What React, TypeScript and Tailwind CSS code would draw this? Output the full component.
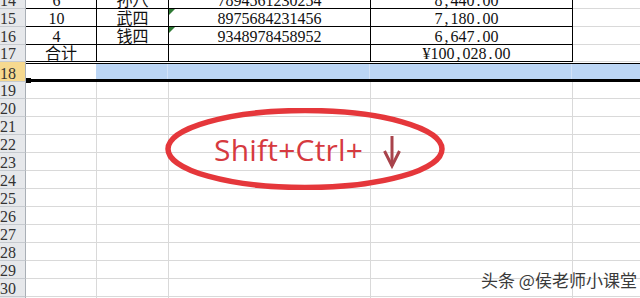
import React from "react";

const tableRows = [
  { n: 14, a: "6", b: "孙八", c: "7894561230254", d: "8,440.00", tri: false, h: "h-[18px]" },
  { n: 15, a: "10", b: "武四", c: "8975684231456", d: "7,180.00", tri: true, h: "h-[18px]" },
  { n: 16, a: "4", b: "钱四", c: "9348978458952", d: "6,647.00", tri: true, h: "h-[18px]" },
  { n: 17, a: "合计", b: "", c: "", d: "¥100,028.00", tri: false, h: "h-[17px]" },
];

const blankRows = [19, 20, 21, 22, 23, 24, 25, 26, 27, 28, 29, 30, 31];

function Num({ s }: { s: string }) {
  return (
    <>
      {s.split("").map((ch, i) =>
        ch === "," || ch === "." ? (
          <span key={i} className="inline-block w-[8px] text-center">
            {ch}
          </span>
        ) : (
          <React.Fragment key={i}>{ch}</React.Fragment>
        )
      )}
    </>
  );
}

function Header({ n, sel }: { n: number; sel?: boolean }) {
  return (
    <div
      className={`w-[26px] shrink-0 flex items-end leading-[14px] text-[#333] border-r border-r-[#a9afb6] border-b border-b-[#c6cacf] ${
        sel ? "bg-[#f6d98f]" : "bg-[#e6e8eb]"
      }`}
    >
      {n}
    </div>
  );
}

export default function App() {
  return (
    <div className="relative w-[640px] h-[298px] overflow-hidden bg-white text-[16px] text-[#111] font-['Liberation_Serif','Noto_Sans_CJK_SC',serif]">
      <div className="mt-[-9px] flex flex-col">
        {tableRows.map((r) => (
          <div key={r.n} className={`flex ${r.h} shrink-0`}>
            <Header n={r.n} />
            <div
              className={`w-[71px] shrink-0 flex items-end justify-center leading-[14px] border-r border-b border-black ${
                r.a === "合计" ? "" : "pr-[9px]"
              }`}
            >
              {r.a}
            </div>
            <div className="w-[72px] shrink-0 flex items-end justify-center leading-[14px] border-r border-b border-black">
              {r.b}
            </div>
            <div className="relative w-[202px] shrink-0 flex items-end justify-center leading-[14px] border-r border-b border-black">
              {r.tri && (
                <div className="absolute left-0 top-0 w-0 h-0 border-t-[6px] border-t-[#2f7a35] border-r-[6px] border-r-transparent" />
              )}
              {r.c}
            </div>
            <div className="w-[202px] shrink-0 flex items-end justify-center pr-[10px] leading-[14px] border-r border-b border-black">
              <Num s={r.d} />
            </div>
            <div className="flex-1 border-b border-[#d9d9d9]" />
          </div>
        ))}

        {/* selected row 18 */}
        <div className="flex h-[20px] shrink-0">
          <Header n={18} sel />
          <div className="relative flex-1 flex flex-col">
            <div className="h-[1px] bg-white shrink-0" />
            <div className="flex-1 flex border-t border-black border-b-[3px]">
              <div className="w-[70px] shrink-0 bg-white" />
              <div className="w-[72px] shrink-0 bg-[#bcd6f5] border-r border-[#d3e3f8]" />
              <div className="w-[202px] shrink-0 bg-[#bcd6f5] border-r border-[#d3e3f8]" />
              <div className="w-[202px] shrink-0 bg-[#bcd6f5] border-r border-[#d3e3f8]" />
              <div className="flex-1 bg-[#bcd6f5]" />
            </div>
            <div className="absolute left-0 top-[16px] w-[5px] h-[5px] bg-black" />
          </div>
        </div>

        {blankRows.map((n) => (
          <div key={n} className={`flex shrink-0 ${n === 19 ? "h-[17px]" : "h-[18px]"}`}>
            <Header n={n} />
            <div className="w-[71px] shrink-0 border-r border-b border-[#d9d9d9]" />
            <div className="w-[72px] shrink-0 border-r border-b border-[#d9d9d9]" />
            <div className="w-[202px] shrink-0 border-r border-b border-[#d9d9d9]" />
            <div className="w-[202px] shrink-0 border-r border-b border-[#d9d9d9]" />
            <div className="flex-1 border-b border-[#d9d9d9]" />
          </div>
        ))}
      </div>

      {/* red ellipse annotation */}
      <svg className="absolute left-[165px] top-[108px]" width="280" height="82" viewBox="0 0 280 82">
        <ellipse cx="140" cy="41" rx="137" ry="38.5" fill="none" stroke="#e5373b" strokeWidth="5.5" />
      </svg>
      <div className="absolute left-[214px] top-[135px] text-[30px] leading-[30px] text-[#d63a3f] font-['Open_Sans',sans-serif] whitespace-nowrap tracking-[0.2px]">
        Shift+Ctrl+
      </div>
      <svg className="absolute left-[380px] top-[133px]" width="24" height="38" viewBox="0 0 24 38">
        <line x1="12" y1="3" x2="12" y2="33" stroke="#a8434b" strokeWidth="3" />
        <polyline points="4.5,18 12,33 19.5,18" fill="none" stroke="#a8434b" strokeWidth="3" strokeLinejoin="miter" />
      </svg>

      {/* watermark */}
      <div className="absolute left-[481px] top-[271px] text-[17px] leading-[17px] text-[#3a3a3a] whitespace-nowrap font-['Noto_Sans_CJK_SC',sans-serif] [text-shadow:0_0_2px_#ffffff]">
        头条 @侯老师小课堂
      </div>
    </div>
  );
}
